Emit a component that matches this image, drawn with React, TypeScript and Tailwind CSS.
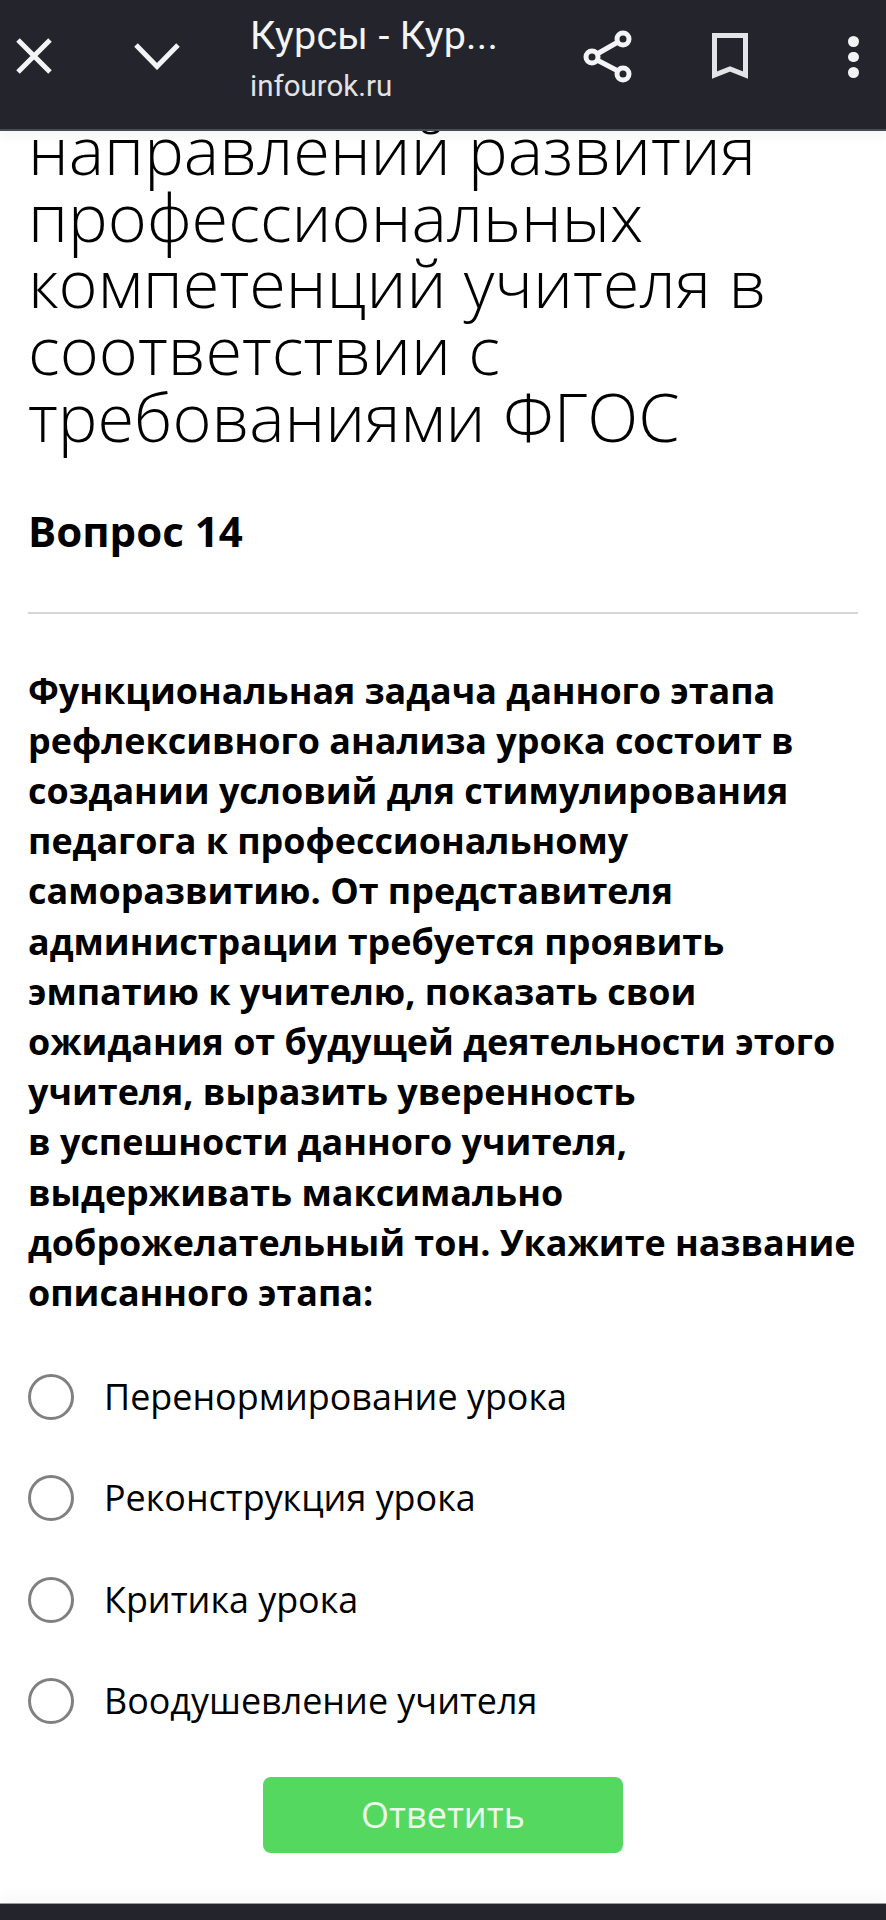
import React from 'react';

const options = [
  'Перенормирование урока',
  'Реконструкция урока',
  'Критика урока',
  'Воодушевление учителя',
];

const App: React.FC = () => {
  return (
    <div className="flex h-[1920px] w-[886px] flex-col overflow-hidden bg-white font-['Open_Sans',sans-serif] text-black">
      <header className="relative z-10 flex h-[131px] shrink-0 items-start border-b-2 border-[#4a4b50] bg-[#24252c] font-['Roboto',sans-serif] text-white shadow-[0_6px_10px_rgba(0,0,0,0.04)]">
        <div className="ml-[16px] mt-[38px] flex h-[36px] w-[36px] items-center justify-center">
          <svg width="36" height="36" viewBox="0 0 36 36" fill="none" stroke="#f4f4f6" strokeWidth="5">
            <path d="M2 2 L34 34 M34 2 L2 34" />
          </svg>
        </div>
        <div className="ml-[82px] mt-[43px] flex h-[27px] w-[46px] items-center justify-center">
          <svg width="46" height="27" viewBox="0 0 46 27" fill="none" stroke="#f4f4f6" strokeWidth="5">
            <path d="M2 2 L23 23.5 L44 2" />
          </svg>
        </div>
        <div className="ml-[70px] flex w-[320px] flex-col">
          <div className="mt-[13px] text-[39.5px] leading-[46px] tracking-[0.3px] text-[#f4f4f6]">Курсы - Кур...</div>
          <div className="mt-[10px] text-[29.5px] leading-[34px] text-[#e2e2e5]">infourok.ru</div>
        </div>
        <div className="ml-[13px] mt-[30px]">
          <svg width="50" height="54" viewBox="0 0 50 54" fill="none" stroke="#f4f4f6" strokeWidth="5">
            <circle cx="40" cy="9" r="6" />
            <circle cx="9" cy="27" r="6" />
            <circle cx="40" cy="44" r="6" />
            <path d="M14 24 L35 12 M14 30 L35 41" />
          </svg>
        </div>
        <div className="ml-[79px] mt-[33px]">
          <svg width="36" height="46" viewBox="0 0 36 46" fill="none" stroke="#e4e4e8" strokeWidth="5">
            <path d="M2.5 2.5 H33.5 V42 L18 36 L2.5 42 Z" />
          </svg>
        </div>
        <div className="ml-[100px] mt-[36px] flex flex-col gap-[5px]">
          <div className="h-[10.5px] w-[10.5px] rounded-full bg-[#f4f4f6]" />
          <div className="h-[10.5px] w-[10.5px] rounded-full bg-[#f4f4f6]" />
          <div className="h-[10.5px] w-[10.5px] rounded-full bg-[#f4f4f6]" />
        </div>
      </header>

      <main className="flex-1 overflow-hidden px-[28px]">
        <h1 className="mt-[-14px] text-[66.7px] font-light leading-[66.7px]">
          направлений развития профессиональных компетенций учителя в соответствии с требованиями ФГОС
        </h1>
        <h2 className="mt-[53px] text-[42px] font-bold leading-[54px]">Вопрос 14</h2>
        <div className="mt-[54px] h-[2px] bg-[#d6d6d6]" />
        <p className="mt-[52px] text-[35.9px] font-bold leading-[50.2px]">
          Функциональная задача данного этапа
          <br />
          рефлексивного анализа урока состоит в
          <br />
          создании условий для стимулирования
          <br />
          педагога к профессиональному
          <br />
          саморазвитию. От представителя
          <br />
          администрации требуется проявить
          <br />
          эмпатию к учителю, показать свои
          <br />
          ожидания от будущей деятельности этого
          <br />
          учителя, выразить уверенность
          <br />
          в успешности данного учителя,
          <br />
          выдерживать максимально
          <br />
          доброжелательный тон. Укажите название
          <br />
          описанного этапа:
        </p>
        <ul className="mt-[54px] flex flex-col gap-[51.3px]">
          {options.map((option) => (
            <li key={option} className="flex h-[50px] items-center">
              <span className="h-[46px] w-[46px] shrink-0 rounded-full border-[3px] border-[#808080]" />
              <span className="ml-[30px] text-[35.9px] leading-[50px]">{option}</span>
            </li>
          ))}
        </ul>
        <div className="mt-[51px] flex justify-center">
          <button className="h-[76px] w-[360px] rounded-[8px] bg-[#55d860] text-[36px] text-[#eafbea]">
            Ответить
          </button>
        </div>
      </main>

      <footer className="relative z-10 h-[17px] shrink-0 border-t-[1.5px] border-[#9a9a9a] bg-[#24252c] shadow-[0_-8px_14px_rgba(0,0,0,0.03)]" />
    </div>
  );
};

export default App;
